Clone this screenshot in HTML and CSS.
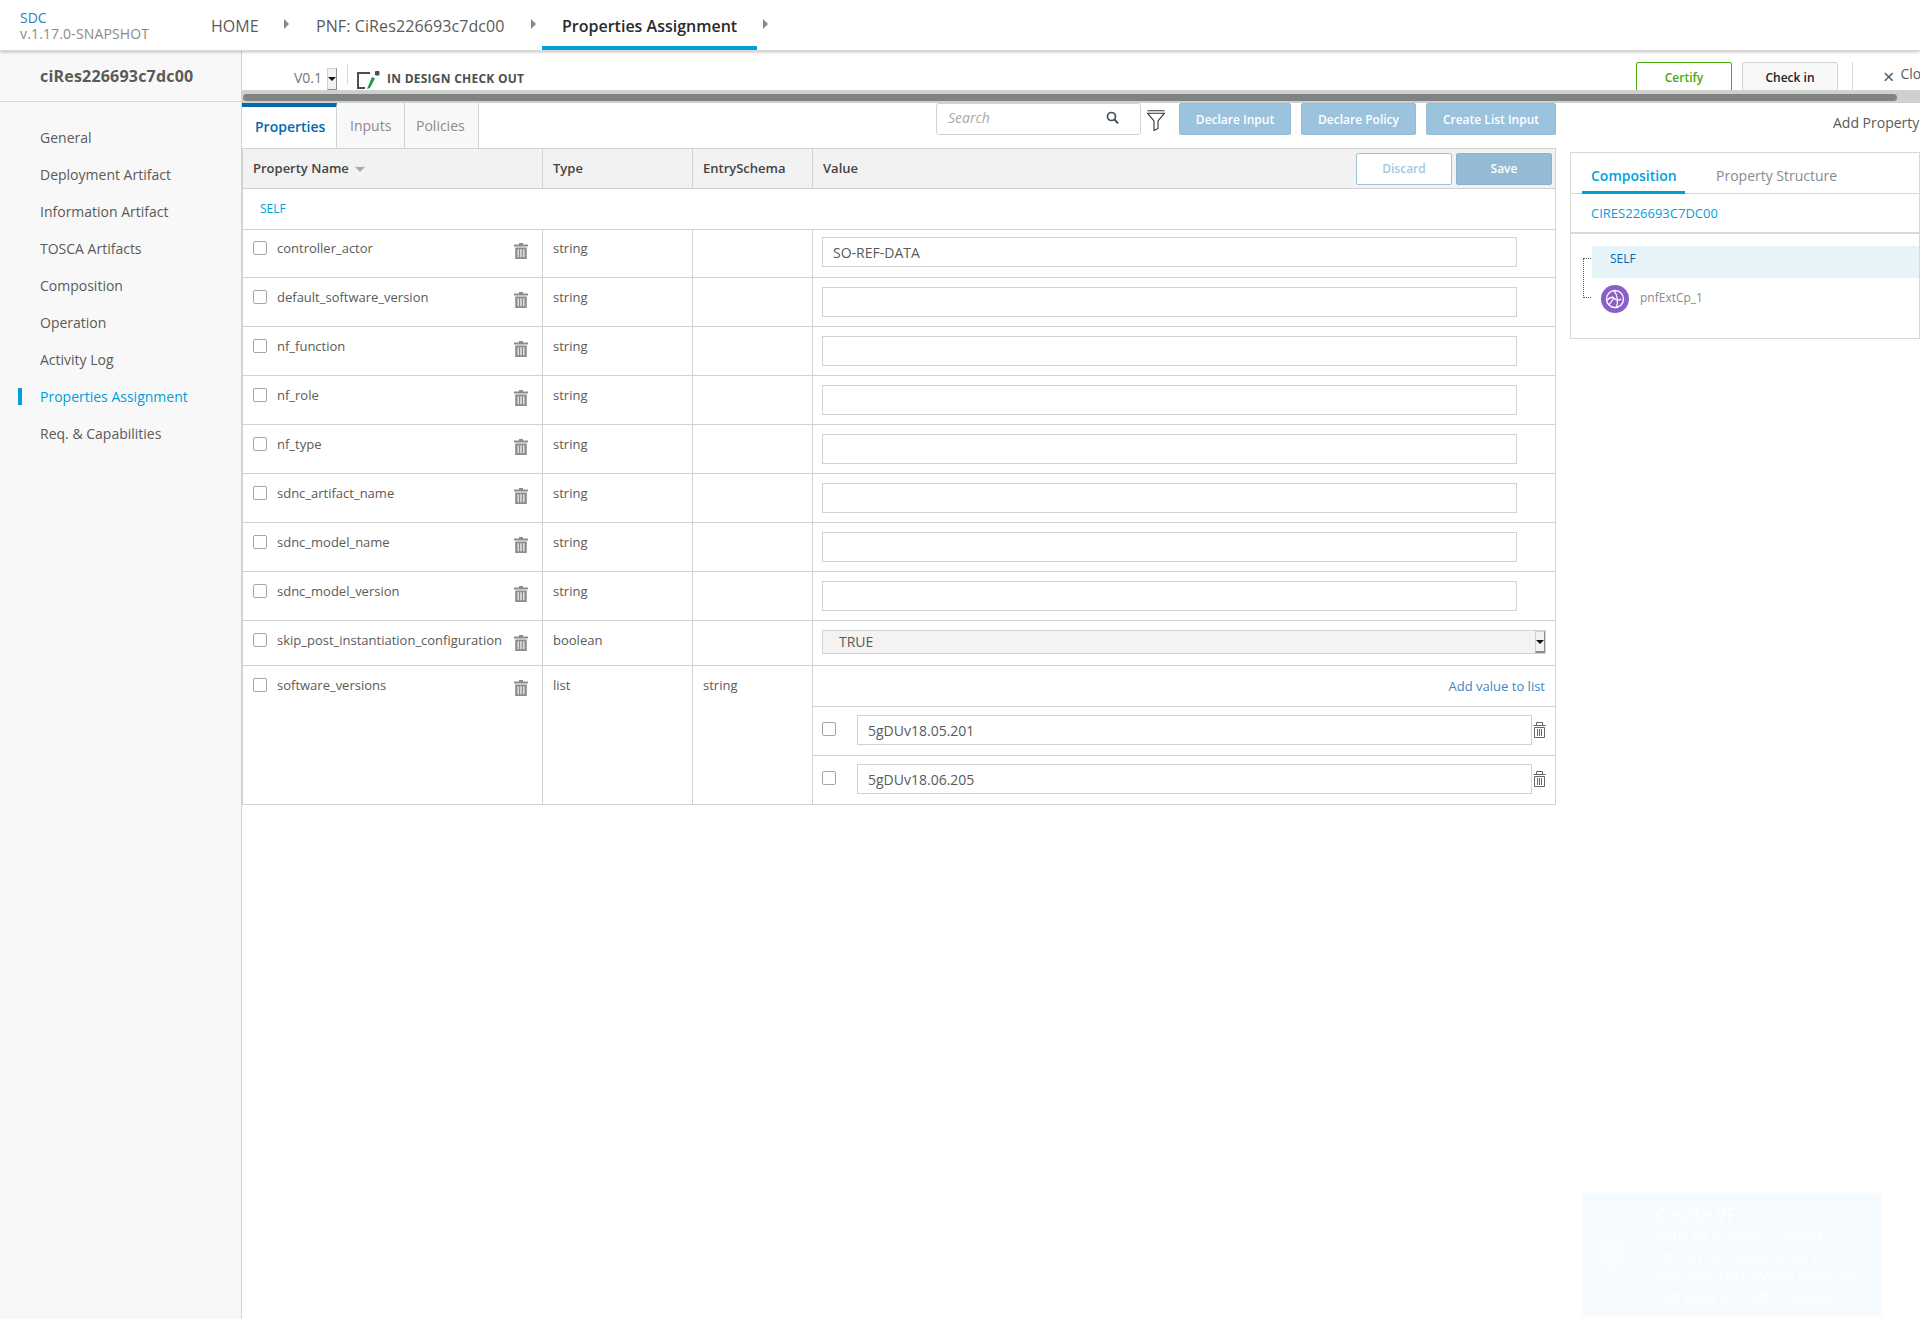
FILE: index.html
```html
<!DOCTYPE html>
<html lang="en">
<head>
    <meta charset="UTF-8">
    <title>SDC - Properties Assignment</title>
    <link rel="stylesheet" href="styles.css">
</head>
<body>
    <svg class="defs" width="0" height="0">
        <symbol id="trash" viewBox="0 0 14 16">
            <path d="M5 0h4v1.5h5V3.4H0V1.5h5zM1.2 4.4h11.6V16H1.2zM3.6 6.2v8h1.1v-8zm2.8 0v8h1.2v-8zm2.9 0v8h1.1v-8z" fill-rule="evenodd"/>
        </symbol>
        <symbol id="trash-line" viewBox="0 0 13 16">
            <path d="M.5 3.500h12M3.500 3V.5h6V3M1.500 5.500h10v10h-10zM4.500 7v7M6.500 7v7M8.500 7v7" fill="none" stroke="currentColor"/>
        </symbol>
    </svg>

    <header class="top-bar">
        <div class="brand">
            <div class="brand-name">SDC</div>
            <div class="brand-version">v.1.17.0-SNAPSHOT</div>
        </div>
        <nav class="crumbs">
            <a class="crumb crumb-home">HOME<i class="crumb-arrow"></i></a>
            <a class="crumb crumb-pnf">PNF: CiRes226693c7dc00<i class="crumb-arrow"></i></a>
            <a class="crumb crumb-active">Properties Assignment<i class="crumb-arrow"></i></a>
        </nav>
    </header>

    <div class="main">
        <aside class="sidebar">
            <div class="sidebar-title">ciRes226693c7dc00</div>
            <ul class="side-nav">
                <li>General</li>
                <li>Deployment Artifact</li>
                <li>Information Artifact</li>
                <li>TOSCA Artifacts</li>
                <li>Composition</li>
                <li>Operation</li>
                <li>Activity Log</li>
                <li class="active">Properties Assignment</li>
                <li>Req. &amp; Capabilities</li>
            </ul>
        </aside>

        <section class="content">
            <div class="toolbar">
                <span class="version">V0.1</span>
                <span class="mini-arrow version-arrow"></span>
                <span class="toolbar-sep"></span>
                <svg class="status-icon" width="24" height="18" viewBox="0 0 24 18">
                    <path d="M14 2H2v15h7" fill="none" stroke="#4a4f52" stroke-width="2"/>
                    <path d="M16 6l3 1.5L14 17l-3 1z" fill="#1d9a4b"/>
                    <rect x="19" y="0" width="4.5" height="4.5" rx="1" fill="#4a4f52"/>
                </svg>
                <span class="status-text">IN DESIGN CHECK OUT</span>
                <div class="toolbar-actions">
                    <button class="tool-btn certify">Certify</button>
                    <button class="tool-btn checkin">Check in</button>
                    <span class="toolbar-sep close-sep"></span>
                    <span class="close-x">&#215;</span>
                    <span class="close-text">Close</span>
                </div>
            </div>
            <div class="hscroll"><div class="hscroll-thumb"></div></div>

            <div class="workspace">
                <div class="props">
                    <div class="props-top">
                        <div class="tab active">Properties</div>
                        <div class="tab">Inputs</div>
                        <div class="tab">Policies</div>
                        <div class="props-actions">
                            <div class="search">
                                <span>Search</span>
                                <svg width="13" height="13" viewBox="0 0 13 13"><circle cx="5.5" cy="5.5" r="4" fill="none" stroke="#3f4d5a" stroke-width="1.7"/><path d="M8.5 8.5l3.5 3.8" stroke="#3f4d5a" stroke-width="1.9"/></svg>
                            </div>
                            <svg class="filter" width="18" height="21" viewBox="0 0 18 21">
                                <path d="M.5 .8h17M.5 3.2h17L11 11v7.5l-4 2V11z" fill="none" stroke="#333" stroke-width="1.1"/>
                            </svg>
                            <button class="blue-btn btn-declare">Declare Input</button>
                            <button class="blue-btn btn-policy">Declare Policy</button>
                            <button class="blue-btn btn-list">Create List Input</button>
                        </div>
                    </div>

                    <table class="props-table">
                        <colgroup>
                            <col class="col-name"><col class="col-type"><col class="col-schema"><col>
                        </colgroup>
                        <thead>
                            <tr>
                                <th>Property Name<i class="sort-arrow"></i></th>
                                <th>Type</th>
                                <th>EntrySchema</th>
                                <th>
                                    <div class="value-head">
                                        <span>Value</span>
                                        <button class="btn-discard">Discard</button>
                                        <button class="btn-save">Save</button>
                                    </div>
                                </th>
                            </tr>
                        </thead>
                        <tbody>
                            <tr class="self-row"><td colspan="4">SELF</td></tr>
                            <tr class="prop-row first-row">
                                <td><div class="prop-name"><i class="check"></i><span>controller_actor</span><svg class="trash"><use href="#trash"/></svg></div></td>
                                <td>string</td><td></td>
                                <td class="value-cell"><input class="value-input" value="SO-REF-DATA"></td>
                            </tr>
                            <tr class="prop-row">
                                <td><div class="prop-name"><i class="check"></i><span>default_software_version</span><svg class="trash"><use href="#trash"/></svg></div></td>
                                <td>string</td><td></td>
                                <td class="value-cell"><input class="value-input"></td>
                            </tr>
                            <tr class="prop-row">
                                <td><div class="prop-name"><i class="check"></i><span>nf_function</span><svg class="trash"><use href="#trash"/></svg></div></td>
                                <td>string</td><td></td>
                                <td class="value-cell"><input class="value-input"></td>
                            </tr>
                            <tr class="prop-row">
                                <td><div class="prop-name"><i class="check"></i><span>nf_role</span><svg class="trash"><use href="#trash"/></svg></div></td>
                                <td>string</td><td></td>
                                <td class="value-cell"><input class="value-input"></td>
                            </tr>
                            <tr class="prop-row">
                                <td><div class="prop-name"><i class="check"></i><span>nf_type</span><svg class="trash"><use href="#trash"/></svg></div></td>
                                <td>string</td><td></td>
                                <td class="value-cell"><input class="value-input"></td>
                            </tr>
                            <tr class="prop-row">
                                <td><div class="prop-name"><i class="check"></i><span>sdnc_artifact_name</span><svg class="trash"><use href="#trash"/></svg></div></td>
                                <td>string</td><td></td>
                                <td class="value-cell"><input class="value-input"></td>
                            </tr>
                            <tr class="prop-row">
                                <td><div class="prop-name"><i class="check"></i><span>sdnc_model_name</span><svg class="trash"><use href="#trash"/></svg></div></td>
                                <td>string</td><td></td>
                                <td class="value-cell"><input class="value-input"></td>
                            </tr>
                            <tr class="prop-row">
                                <td><div class="prop-name"><i class="check"></i><span>sdnc_model_version</span><svg class="trash"><use href="#trash"/></svg></div></td>
                                <td>string</td><td></td>
                                <td class="value-cell"><input class="value-input"></td>
                            </tr>
                            <tr class="prop-row bool-row">
                                <td><div class="prop-name"><i class="check"></i><span>skip_post_instantiation_configuration</span><svg class="trash"><use href="#trash"/></svg></div></td>
                                <td>boolean</td><td></td>
                                <td class="value-cell">
                                    <div class="bool-select"><span>TRUE</span><span class="mini-arrow bool-arrow"></span></div>
                                </td>
                            </tr>
                            <tr class="prop-row list-row">
                                <td><div class="prop-name"><i class="check"></i><span>software_versions</span><svg class="trash"><use href="#trash"/></svg></div></td>
                                <td>list</td><td>string</td>
                                <td class="list-cell">
                                    <div class="list-add"><a>Add value to list</a></div>
                                    <div class="list-item">
                                        <i class="check"></i>
                                        <input class="list-input" value="5gDUv18.05.201">
                                        <svg class="trash-line"><use href="#trash-line"/></svg>
                                    </div>
                                    <div class="list-item">
                                        <i class="check"></i>
                                        <input class="list-input" value="5gDUv18.06.205">
                                        <svg class="trash-line"><use href="#trash-line"/></svg>
                                    </div>
                                </td>
                            </tr>
                        </tbody>
                    </table>
                </div>

                <div class="right">
                    <div class="add-property">Add Property</div>
                    <div class="right-panel">
                        <div class="right-tabs">
                            <div class="right-tab active">Composition</div>
                            <div class="right-tab">Property Structure</div>
                        </div>
                        <div class="right-root">CIRES226693C7DC00</div>
                        <div class="tree">
                            <i class="tree-line"></i>
                            <div class="tree-self">SELF</div>
                            <div class="tree-node">
                                <svg width="28" height="28" viewBox="0 0 28 28">
                                    <circle cx="14" cy="14" r="14" fill="#8a5fc9"/>
                                    <g fill="none" stroke="#fff" stroke-width="1.3">
                                        <circle cx="14" cy="14" r="8.5"/>
                                        <path d="M5.8 15.5c3-3 5-4.500 7-2.500s4 3.500 7.500 1M13 5.600c3 4 4.500 10 2.500 16.800M8 20l4.500-6.500"/>
                                    </g>
                                </svg>
                                <span>pnfExtCp_1</span>
                            </div>
                        </div>
                    </div>
                </div>
            </div>
        </section>
    </div>

    <div class="toast">
        <div class="toast-icon">
            <svg width="38" height="38" viewBox="0 0 38 38">
                <circle cx="19" cy="19" r="19" fill="#f8fcfe"/>
                <path d="M11 20l5 5 11-14" fill="none" stroke="#fdfeff" stroke-width="1.500"/>
            </svg>
        </div>
        <div class="toast-text">
            <div class="toast-title">Create VF</div>
            <div class="toast-body">Your VF is being created.&lt;br/&gt;It can take up to 10 minutes.&lt;br/&gt;When done, you can view it in SDC Catalog.</div>
        </div>
    </div>
</body>
</html>
```

FILE: styles.css
```css
* {
    box-sizing: border-box;
}

html, body {
    height: 100%;
}

body {
    margin: 0;
    font-family: "Open Sans", sans-serif;
    font-size: 13px;
    color: #5a5a5a;
    background-color: white;
    overflow: hidden;
}

.defs {
    position: absolute;
}

button {
    font-family: inherit;
}

/* top bar */
.top-bar {
    display: flex;
    height: 51px;
    background-color: white;
    border-bottom: 1px solid #d8d8d8;
    box-shadow: 0 1px 3px rgba(0, 0, 0, 0.25);
    position: relative;
    z-index: 2;
}

.brand {
    width: 211px;
    padding: 10px 0 0 20px;
    line-height: 16px;
    font-size: 14px;
}

.brand-name {
    color: #2f7bbd;
}

.brand-version {
    color: #8a8a8a;
    letter-spacing: 0.15px;
}

.crumbs {
    display: flex;
}

.crumb {
    display: flex;
    position: relative;
    height: 50px;
    padding-top: 15px;
    font-size: 16px;
    line-height: 22px;
    color: #5a5a5a;
    white-space: nowrap;
}

.crumb-home {
    width: 105px;
}

.crumb-pnf {
    width: 226px;
    letter-spacing: 0.1px;
}

.crumb-active {
    width: 215px;
    padding-left: 20px;
    font-weight: 600;
    color: #2a2a2a;
    border-bottom: 4px solid #009fdb;
}

.crumb-arrow {
    position: absolute;
    top: 19px;
    right: 24px;
    border-left: 5px solid #888;
    border-top: 5px solid transparent;
    border-bottom: 5px solid transparent;
}

.crumb-home .crumb-arrow {
    right: 27px;
}

.crumb-pnf .crumb-arrow {
    right: 0;
    left: 215px;
}

.crumb-active .crumb-arrow {
    right: -11px;
}

/* main layout */
.main {
    display: flex;
    height: 1268px;
}

.sidebar {
    width: 242px;
    flex-shrink: 0;
    background-color: #f8f8f8;
    border-right: 1px solid #d2d2d2;
}

.sidebar-title {
    height: 51px;
    padding: 14px 0 0 40px;
    font-size: 16px;
    line-height: 22px;
    font-weight: 700;
    letter-spacing: 0.2px;
    border-bottom: 1px solid #d8d8d8;
}

.side-nav {
    list-style: none;
    margin: 0;
    padding: 17px 0 0 40px;
    font-size: 14px;
}

.side-nav li {
    height: 37px;
    line-height: 37px;
    position: relative;
}

.side-nav li.active {
    color: #009fdb;
}

.side-nav li.active::before {
    content: "";
    position: absolute;
    left: -22px;
    top: 10px;
    width: 4px;
    height: 17px;
    background-color: #009fdb;
}

.content {
    flex: 1;
    min-width: 0;
}

/* toolbar */
.toolbar {
    display: flex;
    align-items: flex-start;
    height: 39px;
    overflow: hidden;
}

.version {
    margin: 17px 0 0 52px;
    font-size: 14px;
    line-height: 20px;
    color: #777;
}

.mini-arrow {
    display: block;
    position: relative;
    background-color: #f2f2f2;
    border: 1px solid #d0d0d0;
    border-right-color: #8c8c8c;
    border-bottom: 2px solid #8c8c8c;
}

.mini-arrow::after {
    content: "";
    position: absolute;
    top: 50%;
    left: 50%;
    margin: -2px 0 0 -4px;
    border-top: 4px solid #111;
    border-left: 4px solid transparent;
    border-right: 4px solid transparent;
}

.version-arrow {
    width: 10px;
    height: 23px;
    margin: 17px 0 0 5px;
}

.toolbar-sep {
    width: 1px;
    height: 20px;
    margin: 13px 8px 0 10px;
    background-color: #d8d8d8;
}

.status-icon {
    margin-top: 20px;
}

.status-text {
    margin: 20px 0 0 7px;
    font-size: 12px;
    line-height: 16px;
    font-weight: 700;
    letter-spacing: 0.25px;
    color: #4a4f52;
}

.toolbar-actions {
    display: flex;
    align-items: flex-start;
    margin-left: auto;
    flex-shrink: 0;
    width: 284px;
    white-space: nowrap;
}

.tool-btn {
    flex-shrink: 0;
    width: 96px;
    height: 36px;
    margin-top: 11px;
    padding: 0 0 5px;
    font-size: 12px;
    font-weight: 600;
    border-radius: 2px;
    background-color: white;
}

.certify {
    color: #4ca90c;
    border: 1px solid #4ca90c;
    margin-right: 10px;
}

.checkin {
    color: #222;
    background-color: #f8f8f8;
    border: 1px solid #d2d2d2;
}

.close-sep {
    flex-shrink: 0;
    height: 30px;
    margin: 11px 0 0 14px;
}

.close-x {
    flex-shrink: 0;
    margin: 14px 0 0 30px;
    font-size: 20px;
    line-height: 24px;
    color: #555;
}

.close-text {
    flex-shrink: 0;
    margin: 14px 0 0 6px;
    font-size: 14px;
    line-height: 18px;
}

.hscroll {
    height: 13px;
    padding: 3px 23px 3px 1px;
    background-color: #cfcfcf;
    border-top: 1px solid #d6d2cc;
}

.hscroll-thumb {
    height: 7px;
    border-radius: 4px;
    background-color: #7f8384;
}

/* properties area */
.workspace {
    display: flex;
}

.props {
    width: 1314px;
    flex-shrink: 0;
}

.props-top {
    display: flex;
    height: 45px;
}

.tab {
    height: 45px;
    padding: 0 13px;
    line-height: 45px;
    font-size: 14px;
    color: #8a8a8a;
    background-color: #f8f8f8;
    border-right: 1px solid #d2d2d2;
}

.tab:nth-child(2) {
    width: 68px;
}

.tab:nth-child(3) {
    width: 74px;
    padding-left: 11px;
}

.tab.active {
    width: 95px;
    padding: 0 13px;
    line-height: 39px;
    font-weight: 600;
    color: #0568ae;
    background-color: white;
    border-top: 4px solid #0568ae;
}

.props-actions {
    display: flex;
    margin-left: auto;
}

.search {
    display: flex;
    justify-content: space-between;
    align-items: center;
    width: 205px;
    height: 32px;
    padding: 0 21px 3px 11px;
    font-size: 14px;
    font-style: italic;
    color: #aaa;
    border: 1px solid #d2d2d2;
    border-radius: 3px;
}

.filter {
    margin: 7px 14px 0 6px;
}

.blue-btn {
    height: 32px;
    padding: 0;
    font-size: 12px;
    font-weight: 600;
    color: white;
    background-color: #9cc3dd;
    border: 1px solid #93bcd8;
    border-radius: 2px;
}

.btn-declare {
    width: 112px;
    margin-right: 10px;
}

.btn-policy {
    width: 115px;
    margin-right: 10px;
}

.btn-list {
    width: 130px;
}

.props-table {
    width: 100%;
    table-layout: fixed;
    border-collapse: collapse;
    border: 1px solid #d2d2d2;
}

.col-name {
    width: 300px;
}

.col-type {
    width: 150px;
}

.col-schema {
    width: 120px;
}

.props-table th,
.props-table td {
    border: 1px solid #d2d2d2;
    vertical-align: top;
    text-align: left;
    padding: 0;
}

.props-table th {
    height: 40px;
    padding: 0 10px;
    line-height: 38px;
    font-weight: 600;
    color: #444;
    background-color: #f2f2f2;
}

.sort-arrow {
    display: inline-block;
    margin: 0 0 1px 6px;
    border-top: 5px solid #aaa;
    border-left: 5px solid transparent;
    border-right: 5px solid transparent;
}

.value-head {
    display: flex;
    align-items: center;
    height: 39px;
    margin-right: -7px;
}

.value-head span {
    margin: -2px auto 0 0;
}

.btn-discard,
.btn-save {
    width: 96px;
    height: 32px;
    padding: 0;
    font-size: 12px;
    font-weight: 600;
    line-height: 30px;
    border-radius: 2px;
}

.btn-discard {
    color: #a3c6de;
    background-color: white;
    border: 1px solid #9cc3dd;
    margin-right: 4px;
}

.btn-save {
    color: white;
    background-color: #94bad4;
    border: 1px solid #8bb3cf;
}

.props-table .self-row td {
    height: 41px;
    padding-left: 17px;
    line-height: 40px;
    font-size: 12px;
    color: #009fdb;
}

.props-table .prop-row td {
    height: 49px;
    padding: 10px 10px 0;
    line-height: 18px;
}

.props-table .prop-row.first-row td {
    height: 48px;
    padding-top: 9px;
}

.props-table .prop-row.bool-row td {
    height: 45px;
}

.prop-name {
    display: flex;
    align-items: flex-start;
    white-space: nowrap;
}

.check {
    display: block;
    flex-shrink: 0;
    width: 14px;
    height: 14px;
    margin-top: 2px;
    border: 1px solid #a5a5a5;
    border-radius: 2px;
    background-color: white;
}

.prop-name span {
    margin-left: 10px;
}

.trash {
    width: 14px;
    height: 16px;
    margin: 4px 4px 0 auto;
    fill: #8c8c8c;
    flex-shrink: 0;
}

.props-table .prop-row .value-cell {
    padding: 9px 0 0 9px;
}

.props-table .prop-row.first-row .value-cell {
    padding-top: 7px;
}

.value-input {
    display: block;
    width: 695px;
    height: 30px;
    padding: 0 10px;
    font-family: inherit;
    font-size: 14px;
    color: #5a5a5a;
    border: 1px solid #d2d2d2;
    outline: none;
}

.bool-select {
    display: flex;
    justify-content: space-between;
    align-items: center;
    width: 724px;
    height: 24px;
    padding: 0 0 0 16px;
    font-size: 14px;
    background-color: #f4f3f1;
    border: 1px solid #d2d2d2;
}

.bool-arrow {
    width: 10px;
    height: 22px;
}

.props-table .prop-row .list-cell {
    padding: 0;
}

.list-add {
    height: 41px;
    padding: 9px 10px 0 0;
    line-height: 22px;
    text-align: right;
    border-bottom: 1px solid #d2d2d2;
    color: #3f84c5;
}

.list-item {
    display: flex;
    align-items: flex-start;
    height: 49px;
    padding: 8px 0 0 9px;
    border-bottom: 1px solid #d2d2d2;
}

.list-item:last-child {
    height: 48px;
    border-bottom: none;
}

.list-item .check {
    margin-top: 7px;
}

.list-input {
    width: 675px;
    height: 30px;
    margin-left: 21px;
    padding: 0 10px;
    font-family: inherit;
    font-size: 14px;
    color: #5a5a5a;
    border: 1px solid #d2d2d2;
    outline: none;
}

.trash-line {
    width: 13px;
    height: 16px;
    margin: 7px 0 0 1px;
    color: #666;
}

/* right panel */
.right {
    flex: 1;
    min-width: 0;
    overflow: hidden;
    padding-left: 14px;
}

.add-property {
    height: 49px;
    padding: 11px 0 0 263px;
    line-height: 18px;
    font-size: 14px;
    white-space: nowrap;
}

.right-panel {
    width: 350px;
    height: 187px;
    border: 1px solid #d8d8d8;
}

.right-tabs {
    display: flex;
    height: 41px;
    padding-left: 11px;
    border-bottom: 1px solid #d8d8d8;
}

.right-tab {
    width: 103px;
    height: 41px;
    margin-right: 21px;
    padding-left: 10px;
    line-height: 45px;
    font-size: 14px;
    color: #8a8a8a;
    white-space: nowrap;
}

.right-tab.active {
    padding-left: 9px;
    font-weight: 600;
    color: #009fdb;
    border-bottom: 3px solid #009fdb;
}

.right-root {
    height: 40px;
    padding-left: 20px;
    line-height: 38px;
    font-size: 13px;
    color: #009fdb;
    border-bottom: 2px solid #d8d8d8;
}

.tree {
    position: relative;
    padding: 12px 0 0 21px;
}

.tree-line {
    position: absolute;
    left: 12px;
    top: 24px;
    width: 8px;
    height: 40px;
    border: 1px dotted #555;
    border-right: none;
}

.tree-self {
    height: 32px;
    padding-left: 18px;
    line-height: 26px;
    font-size: 12px;
    color: #0568ae;
    background-color: #e6f4fa;
}

.tree-node {
    display: flex;
    align-items: center;
    margin: 7px 0 0 9px;
    font-size: 12px;
    line-height: 26px;
    color: #8a8a8a;
}

.tree-node span {
    margin: -2px 0 0 11px;
}

/* fading notification */
.toast {
    position: absolute;
    left: 1582px;
    top: 1193px;
    display: flex;
    width: 300px;
    height: 123px;
    background-color: #f5fbfe;
}

.toast-icon {
    width: 73px;
    padding: 43px 0 0 10px;
}

.toast-text {
    flex: 1;
    padding: 9px 10px 0 0;
    color: #fcfeff;
    font-weight: 700;
    font-size: 14px;
    line-height: 20px;
}

.toast-title {
    font-size: 17px;
    line-height: 25px;
}
```
